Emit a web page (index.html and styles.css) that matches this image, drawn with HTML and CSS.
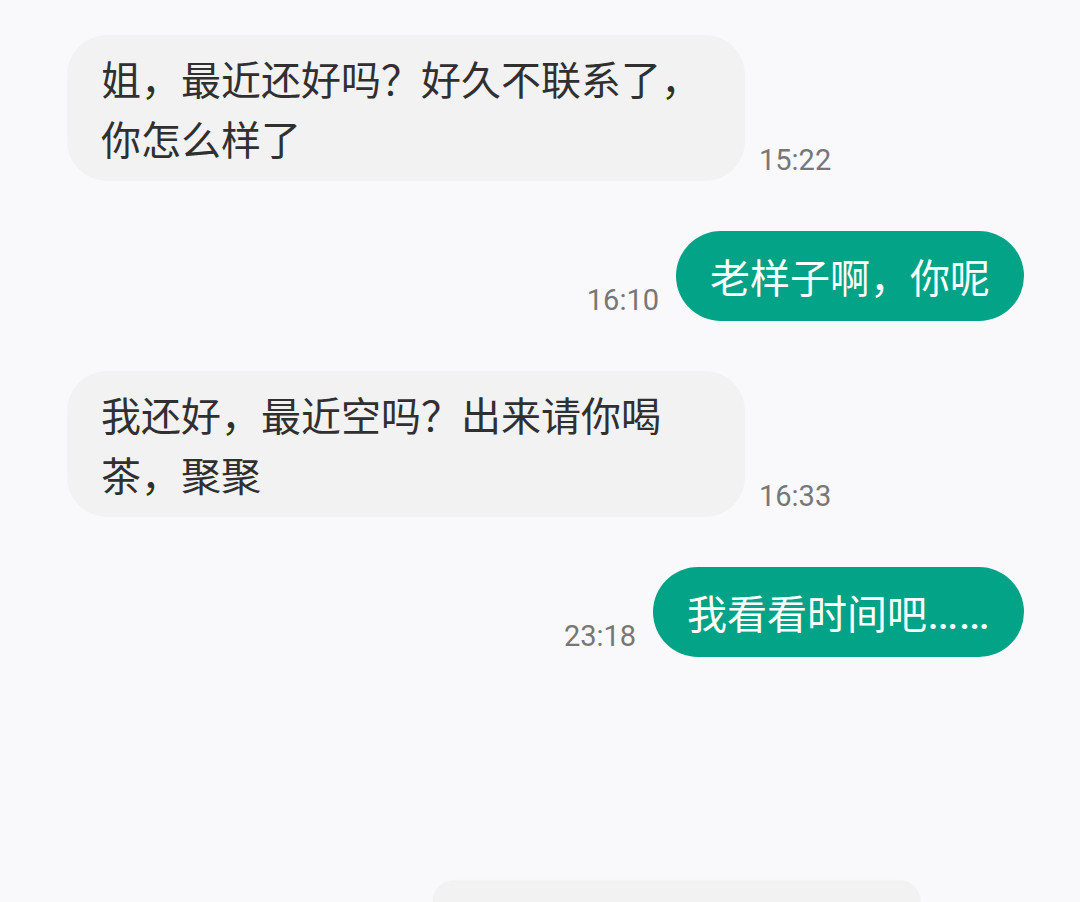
FILE: index.html
```html
<!DOCTYPE html>
<html lang="zh-CN">
<head>
    <meta charset="UTF-8">
    <meta name="viewport" content="width=device-width, initial-scale=1.0">
    <title>聊天</title>
    <link rel="stylesheet" href="styles.css">
</head>
<body>
    <div class="chat">
        <div class="row left">
            <div class="bubble">姐，最近还好吗？好久不联系了，你怎么样了</div>
            <span class="time">15:22</span>
        </div>
        <div class="row right">
            <span class="time">16:10</span>
            <div class="bubble">老样子啊，你呢</div>
        </div>
        <div class="row left">
            <div class="bubble">我还好，最近空吗？出来请你喝茶，聚聚</div>
            <span class="time">16:33</span>
        </div>
        <div class="row right">
            <span class="time">23:18</span>
            <div class="bubble">我看看时间吧<span class="dots">……</span></div>
        </div>
    </div>
    <div class="bottom-card"></div>
</body>
</html>
```

FILE: styles.css
```css
/* 基本樣式 */
html {
    overflow: hidden;
}

body {
    margin: 0;
    padding: 35px 56px 0 67px;
    height: 902px;
    box-sizing: border-box;
    overflow: hidden;
    background-color: #f9f9fb;
    font-family: "Noto Sans CJK SC", "Noto Sans", sans-serif;
}

.chat {
    display: flex;
    flex-direction: column;
    gap: 50px;
}

.row {
    display: flex;
    align-items: flex-end;
    gap: 14px;
}

.row.right {
    justify-content: flex-end;
    gap: 17px;
}

.bubble {
    max-width: 678px;
    box-sizing: border-box;
    padding: 13px 34px;
    font-size: 40px;
    line-height: 60px;
    color: #303030;
    background-color: #f2f2f2;
    border-radius: 40px;
}

.right .bubble {
    padding: 15px 34px;
    white-space: nowrap;
    color: #fff;
    background-color: #02a386;
    border-radius: 45px;
}

.dots {
    font-family: Roboto, "Liberation Sans", sans-serif;
    font-size: 47px;
    line-height: 1;
}

.time {
    font-family: Roboto, "Liberation Sans", sans-serif;
    font-size: 29px;
    color: #777;
    margin-bottom: 4px;
}

.bottom-card {
    margin: 224px 0 0 366px;
    width: 487px;
    height: 21px;
    background-color: #f2f2f2;
    border-radius: 45px 45px 0 0;
    box-shadow: 0 0 2px rgba(0, 0, 0, 0.08);
}
```
